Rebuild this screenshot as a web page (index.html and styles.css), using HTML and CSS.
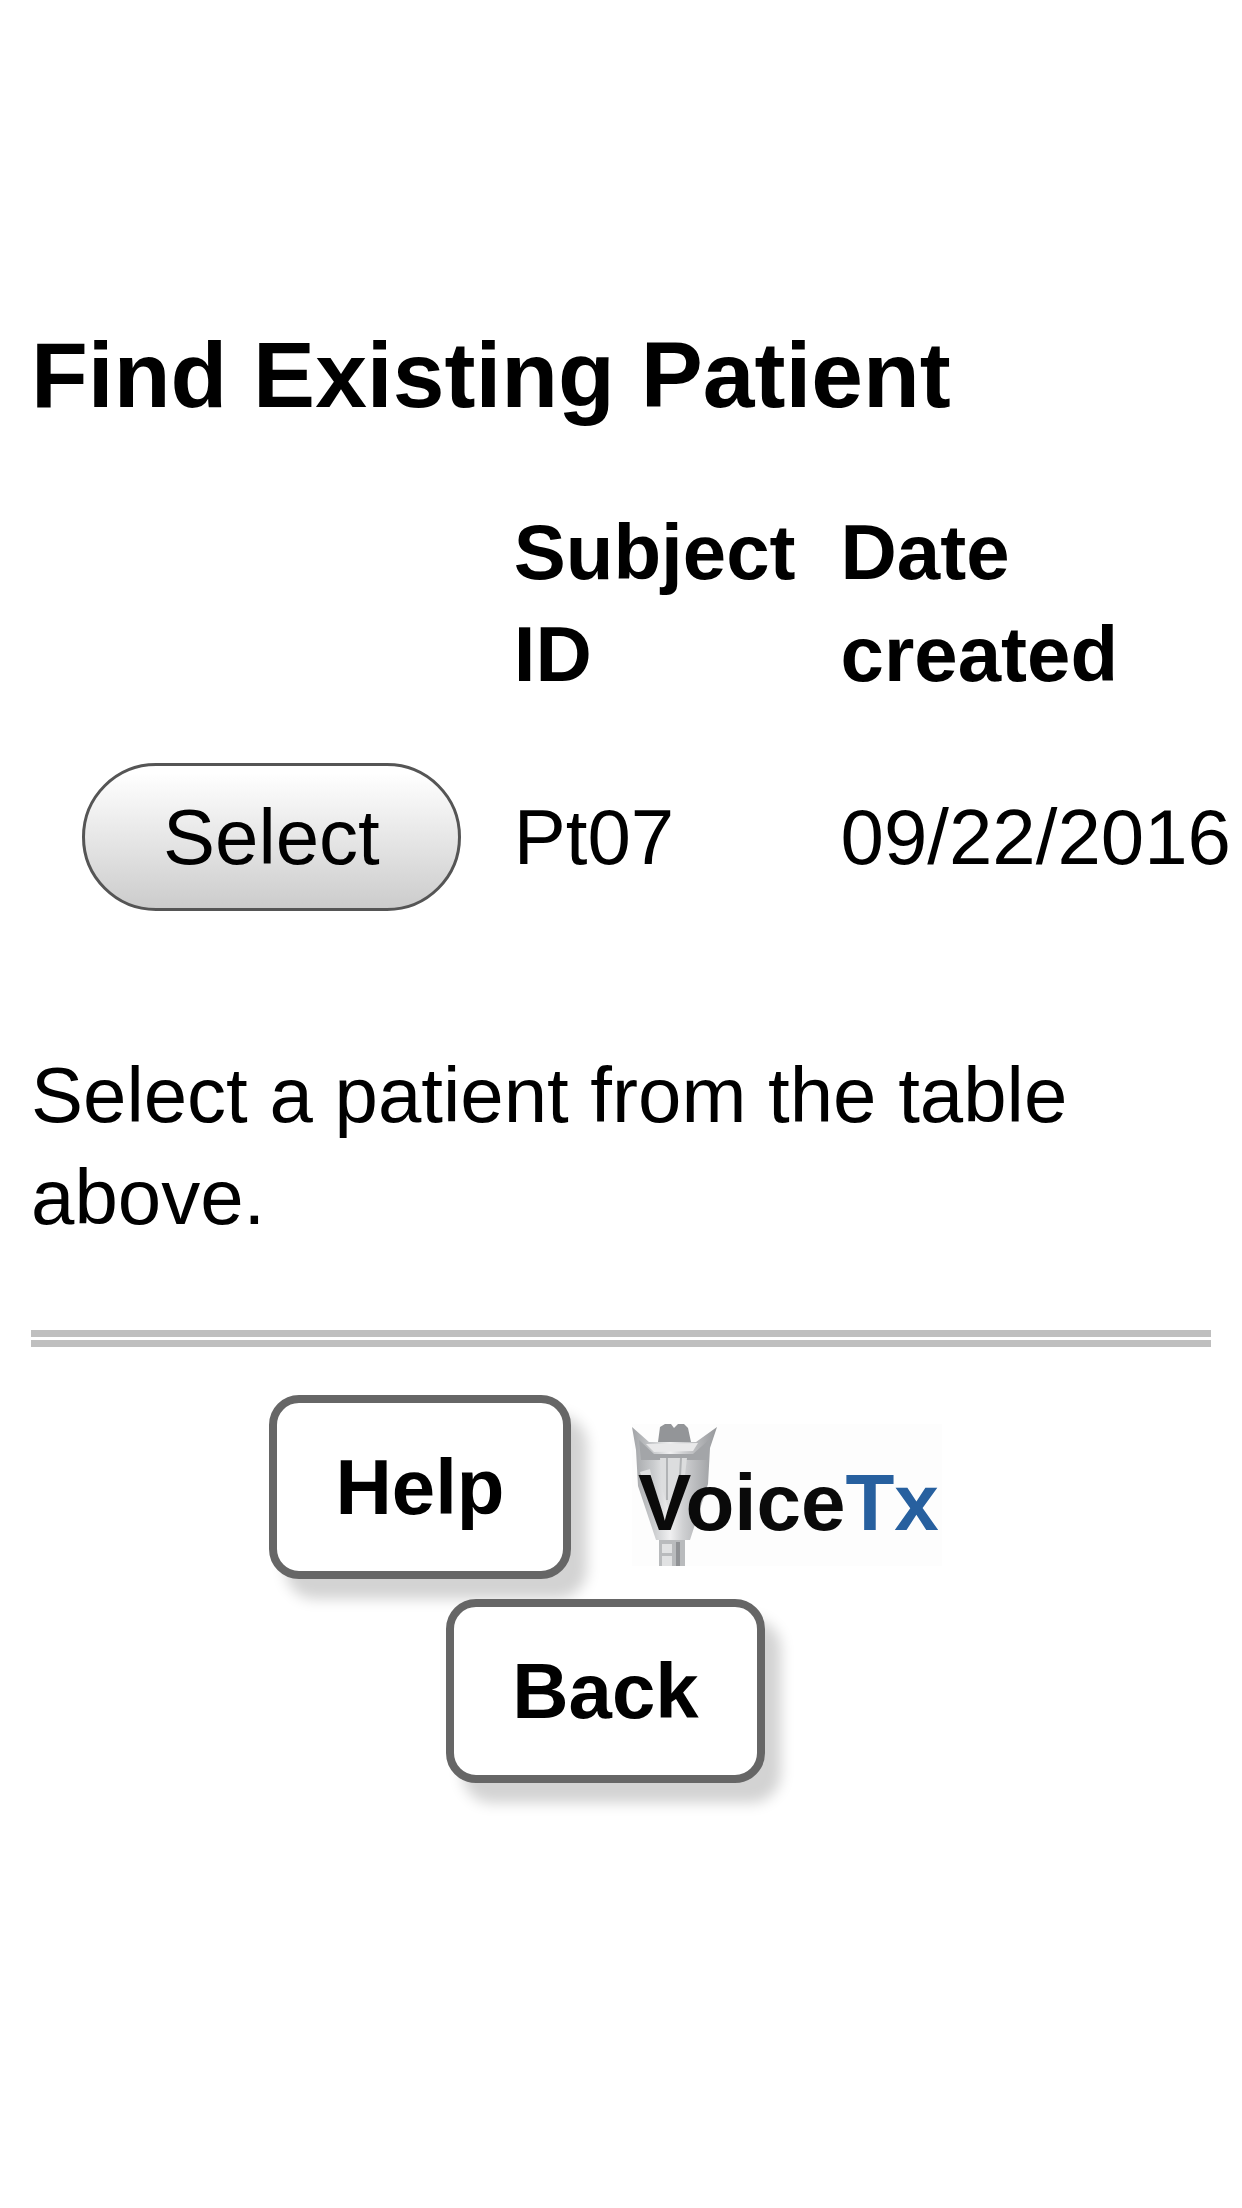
FILE: index.html
```html
<!DOCTYPE html>
<html lang="en">
<head>
<meta charset="utf-8">
<meta name="viewport" content="width=device-width, initial-scale=1">
<title>Find Existing Patient</title>
<link rel="stylesheet" href="styles.css">
</head>
<body>
<main class="page">
  <h1 class="title">Find Existing Patient</h1>
  <table class="patients">
    <thead>
      <tr><td></td><th scope="col">Subject ID</th><th scope="col">Date created</th></tr>
    </thead>
    <tbody>
      <tr>
        <td class="action"><button class="select" type="button">Select</button></td>
        <td>Pt07</td>
        <td>09/22/2016</td>
      </tr>
    </tbody>
  </table>
  <p class="hint">Select a patient from the table above.</p>
  <hr class="rule">
  <footer class="footer">
    <div class="row">
      <button class="nav" type="button">Help</button>
      <svg class="logo" viewBox="0 0 310 142" role="img" aria-label="VoiceTx">
        <defs>
          <linearGradient id="tube" x1="0" x2="1" y1="0" y2="0">
            <stop offset="0" stop-color="#a2a4a7"/>
            <stop offset=".25" stop-color="#c9cbcd"/>
            <stop offset=".45" stop-color="#f0f0f1"/>
            <stop offset=".6" stop-color="#cfd0d2"/>
            <stop offset="1" stop-color="#96989b"/>
          </linearGradient>
        </defs>
        <rect width="310" height="142" fill="#fdfdfd"/>
        <path d="M0 3 L17 18 L64 18 L85 3 L78 24 L76 60 L58 116 L24 116 L6 62 L4 26Z" fill="url(#tube)"/>
        <path d="M26 18 L28 3 L33 0 L39 0 L42 4 L46 0 L52 0 L56 4 L59 18Z" fill="#939598"/>
        <path d="M14 20 L66 19 L61 27 L22 28Z" fill="#e9e9ea"/>
        <path d="M7 16 L22 30 L61 30 L78 15 L76 36 L9 36Z" fill="#a3a5a8"/>
        <path d="M8 48 L18 45 L26 82 L20 86Z" fill="#dedfe0"/>
        <path d="M28 34 L55 34 L51 68 L40 96 L30 64Z" fill="#dcddde"/>
        <path d="M35 34 V76 M49 34 L47 70" fill="none" stroke="#b1b3b5" stroke-width="2"/>
        <path d="M27 116 H53 V142 H27Z" fill="#b9bbbd"/>
        <path d="M30 120 H40 V129 H30Z M30 132 H40 V142 H30Z" fill="#e1e2e3"/>
        <path d="M44 118 H48 V142 H44Z" fill="#909295"/>
        <text class="logo-text" x="6" y="106">Voice<tspan class="logo-tx">Tx</tspan></text>
      </svg>
    </div>
    <button class="nav" type="button">Back</button>
  </footer>
</main>
</body>
</html>
```
FILE: styles.css
```css
* { box-sizing: border-box; }

body {
  margin: 0;
  background: #fff;
  color: #000;
  font: 78px/102px "Liberation Sans", Arial, Helvetica, sans-serif;
}

.page { padding: 315px 31px 64px; }

.title {
  margin: 0 0 66px;
  font-size: 93px;
  line-height: 120px;
}

.patients {
  width: min-content;
  border-collapse: collapse;
}

.patients th,
.patients td {
  padding: 0 45px 0 0;
  text-align: left;
  vertical-align: middle;
}

.patients th { padding-bottom: 58px; }
.patients tbody td { white-space: nowrap; }
.patients th:last-child,
.patients td:last-child { padding-right: 0; }
.patients .action { padding: 0 53px 0 51px; }

.select {
  display: block;
  padding: 20px 78px;
  border: 3px solid #555;
  border-radius: 74px;
  background: linear-gradient(#fff 5%, #ccc);
  color: #000;
  font: inherit;
}

.hint { margin: 133px 0 82px; }

.rule {
  height: 17px;
  margin: 0 0 48px;
  border: solid #bfbfbf;
  border-width: 7px 0;
}

.footer {
  display: flex;
  flex-direction: column;
  align-items: center;
  gap: 20px;
  padding-right: 31px;
}

.row {
  display: flex;
  align-items: center;
  gap: 61px;
}

.nav {
  padding: 33px 58px;
  border: 8px solid #666;
  border-radius: 30px;
  background: #fff;
  box-shadow: 16px 20px 14px #d3d3d3;
  color: #000;
  font: inherit;
  font-weight: bold;
}

.logo {
  width: 310px;
  height: 142px;
  margin-top: 16px;
}

.logo-text {
  font-size: 80px;
  font-weight: bold;
  fill: #0a0a0a;
}

.logo-tx { fill: #27609f; }
```
